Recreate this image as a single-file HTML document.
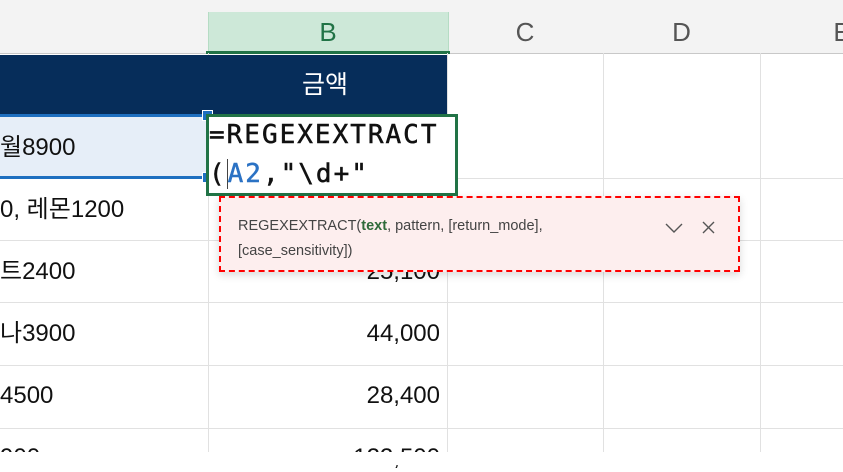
<!DOCTYPE html>
<html><head><meta charset="utf-8"><style>
body{margin:0;width:843px;height:465px;overflow:hidden;background:#fff;position:relative;font-family:"Liberation Sans","Noto Sans CJK KR",sans-serif}
.a{position:absolute}
.hl{position:absolute;left:0;width:843px;height:1px;background:#e1e1e1}
.vl{position:absolute;top:53px;width:1px;height:399px;background:#e1e1e1}
.t{position:absolute;font-size:24px;color:#111;white-space:nowrap;line-height:28px}
.r{text-align:right;width:230px;left:210px}
.col{position:absolute;top:17px;font-size:26px;color:#555;text-align:center}
</style></head><body>
<div class="a" style="left:0;top:0;width:843px;height:53px;background:#f3f3f3"></div>
<div class="a" style="left:0;top:53px;width:843px;height:1px;background:#c8c8c8"></div>
<div class="a" style="left:208px;top:12px;width:239px;height:40px;background:#cde8d8;border-left:1px solid #b5dcc4;border-right:1px solid #b5dcc4"></div>
<div class="a" style="left:206px;top:51px;width:244px;height:3px;background:#217346"></div>
<div class="col" style="left:208px;width:240px;color:#217346">B</div>
<div class="col" style="left:447px;width:156px">C</div>
<div class="col" style="left:603px;width:157px">D</div>
<div class="col" style="left:822px;width:40px">E</div>
<div class="vl" style="left:208px"></div><div class="vl" style="left:447px"></div><div class="vl" style="left:603px"></div><div class="vl" style="left:760px"></div>
<div class="a" style="left:0;top:55px;width:447px;height:60px;background:#062d5a"></div>
<div class="t" style="left:302px;top:71px;color:#fff;font-size:25px">금액</div>
<div class="hl" style="top:178px"></div><div class="hl" style="top:240px"></div><div class="hl" style="top:302px"></div><div class="hl" style="top:365px"></div><div class="hl" style="top:428px"></div>
<div class="a" style="left:0;top:116px;width:207px;height:61px;background:#e6eef8"></div>
<div class="a" style="left:0;top:114px;width:207px;height:3px;background:#1e6fc0"></div>
<div class="a" style="left:0;top:176px;width:207px;height:3px;background:#1e6fc0"></div>
<div class="a" style="left:202px;top:110px;width:9px;height:9px;background:#1e6fc0;border:1px solid #fff"></div>
<div class="a" style="left:202px;top:172px;width:9px;height:9px;background:#1e6fc0;border:1px solid #fff"></div>
<div class="t" style="left:0;top:134px">월8900</div>
<div class="t" style="left:0;top:196px">0, 레몬1200</div>
<div class="t" style="left:0;top:258px">트2400</div>
<div class="t" style="left:0;top:320px">나3900</div>
<div class="t" style="left:0;top:382px">4500</div>
<div class="t" style="left:0;top:444px">900</div>
<div class="t r" style="top:258px">25,100</div>
<div class="t r" style="top:320px">44,000</div>
<div class="t r" style="top:382px">28,400</div>
<div class="t r" style="top:444px">122,500</div>
<div class="a" style="left:0;top:452px;width:843px;height:13px;background:#fff;z-index:5"></div>
<div class="a" style="left:206px;top:114px;width:246px;height:76px;background:#fff;border:3px solid #217346"></div>
<div class="a" style="left:209px;top:116px;font-family:'DejaVu Sans Mono','Liberation Mono',monospace;font-size:26px;line-height:39px;color:#111;white-space:pre;letter-spacing:2px;-webkit-text-stroke:0.5px #111">=REGEXEXTRACT
(<span style="border-left:1px solid #444"></span><span style="color:#2b72c4;-webkit-text-stroke:0.5px #2b72c4">A2</span>,"\d+"</div>
<div class="a" style="left:219px;top:196px;width:517px;height:72px;background:#fdeeee;border:2px dashed #f00;box-shadow:0 3px 8px rgba(0,0,0,.15)"></div>
<div class="a" style="left:238px;top:214px;font-size:14.5px;line-height:25px;color:#444;width:330px">REGEXEXTRACT(<b style="color:#2f6b3a">text</b>, pattern, [return_mode],<br>[case_sensitivity])</div>
<svg class="a" style="left:664px;top:220px" width="56" height="16"><path d="M2 4l8 8 8-8" stroke="#555" stroke-width="1.4" fill="none"/><path d="M39 2l11 11M50 2L39 13" stroke="#555" stroke-width="1.4"/></svg>
</body></html>
